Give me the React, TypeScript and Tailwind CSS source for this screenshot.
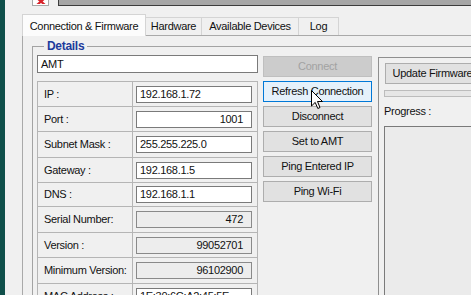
import clsx from "clsx";

const rows = [
  { label: "IP :", value: "192.168.1.72", h: "h-[25px]" },
  { label: "Port :", value: "1001", h: "h-[25px]", right: true },
  { label: "Subnet Mask :", value: "255.255.225.0", h: "h-[26px]" },
  { label: "Gateway :", value: "192.168.1.5", h: "h-[25px]" },
  { label: "DNS :", value: "192.168.1.1", h: "h-[24px]" },
  { label: "Serial Number:", value: "472", h: "h-[26px]", right: true, ro: true },
  { label: "Version :", value: "99052701", h: "h-[25px]", right: true, ro: true },
  { label: "Minimum Version:", value: "96102900", h: "h-[26px]", right: true, ro: true },
  { label: "MAC Address :", value: "1E:30:6C:A2:45:5E", h: "h-[25px]" },
];

const buttons = ["Connect", "Refresh Connection", "Disconnect", "Set to AMT", "Ping Entered IP", "Ping Wi-Fi"];

function Field({ value, right, ro }: { value: string; right?: boolean; ro?: boolean }) {
  return (
    <div
      className={clsx(
        "ml-[3px] w-[116px] h-[17px] border flex items-center pl-[3px] whitespace-nowrap overflow-hidden",
        ro ? "bg-[#ededed] border-[#8a8a8a]" : "bg-white border-[#7a7a7a]",
        right && "justify-end pr-[8px]"
      )}
    >
      {value}
    </div>
  );
}

function Cursor() {
  return (
    <svg width="13" height="20" viewBox="0 0 13 20">
      <path d="M0.5 0.5 L0.5 16 L4.2 12.4 L6.8 18.5 L9 17.5 L6.5 11.5 L11.5 11.5 Z" fill="#fff" stroke="#000" strokeWidth="1" />
    </svg>
  );
}

export default function App() {
  return (
    <div className="w-[471px] h-[295px] overflow-hidden bg-[#f0f0f0] flex text-[11px] tracking-[-0.3px] leading-none text-[#111] font-['Liberation_Sans',Arial,sans-serif]">
      {/* window edge */}
      <div className="w-[5px] shrink-0 bg-[#0f4f4a]" />

      <div className="flex-1 flex flex-col min-w-0">
        {/* toolbar remnants */}
        <div className="h-[14px] flex items-start shrink-0">
          <div className="ml-[27px] w-[17px] h-[6px] border border-t-0 border-[#a8a8a8] bg-white flex justify-center">
            <svg width="10" height="4" viewBox="0 0 10 4">
              <path d="M1 -2 L5 1.5 L9 -2 M1 5 L5 1.5 L9 5" stroke="#d8232a" strokeWidth="2.2" fill="none" />
            </svg>
          </div>
          <div className="ml-[9px] flex-1 h-[6px] bg-[#a6a6a6] border-l border-b border-[#3c3c3c]" />
        </div>

        {/* tabs */}
        <div className="h-[21px] flex items-end pl-[17px] shrink-0 whitespace-nowrap">
          <div className="relative z-10 -mb-px h-[22px] w-[124px] bg-[#fcfcfc] border border-b-0 border-[#d4d4d4] flex items-center justify-center pt-[1px]">
            Connection &amp; Firmware
          </div>
          <div className="h-[18px] w-[56px] border border-b-0 border-l-0 border-[#d4d4d4] flex items-center justify-center">Hardware</div>
          <div className="h-[18px] w-[97px] border border-b-0 border-l-0 border-[#d4d4d4] flex items-center justify-center">Available Devices</div>
          <div className="h-[18px] w-[40px] border border-b-0 border-l-0 border-[#d4d4d4] flex items-center justify-center">Log</div>
        </div>

        {/* tab page */}
        <div className="flex-1 ml-[17px] border-l border-t border-[#a9a9a9] pl-[9px] pt-[3px]">
          <fieldset className="border-t border-l border-[#a3a3a3] pl-[4px] w-[470px]">
            <legend className="ml-[7px] px-[3px] h-[14px] leading-[14px] text-[12px] font-bold text-[#1c3b9c]">Details</legend>

            <div className="flex items-start">
              {/* left column */}
              <div className="w-[221px] shrink-0 flex flex-col pt-[2px]">
                <div className="h-[18px] border border-[#7a7a7a] bg-white flex items-center pl-[3px]">AMT</div>

                <div className="mt-[8px] border-l border-[#b5b5b5]">
                  {rows.map((r) => (
                    <div key={r.label} className={clsx("flex border-t border-[#b5b5b5]", r.h)}>
                      <div className="w-[95px] border-r border-[#b5b5b5] flex items-center pl-[6px] whitespace-nowrap">{r.label}</div>
                      <div className="w-[125px] border-r border-[#b5b5b5] flex items-center">
                        <Field value={r.value} right={r.right} ro={r.ro} />
                      </div>
                    </div>
                  ))}
                </div>
              </div>

              {/* buttons */}
              <div className="ml-[5px] w-[109px] shrink-0 flex flex-col gap-[4px] pt-[3px] relative">
                {buttons.map((b, i) => (
                  <div
                    key={b}
                    className={clsx(
                      "h-[21px] border flex items-center justify-center whitespace-nowrap",
                      i === 0 && "bg-[#cccccc] border-[#bfbfbf] text-[#a2a2a2]",
                      i === 1 && "bg-[#e5f1fb] border-[#0078d7]",
                      i > 1 && "bg-[#e1e1e1] border-[#adadad]"
                    )}
                  >
                    {b}
                  </div>
                ))}
                <div className="absolute left-[48px] top-[37px]">
                  <Cursor />
                </div>
              </div>

              {/* firmware panel */}
              <div className="ml-[6px] mt-[4px] flex-1 h-[260px] border-l border-t border-[#8f8f8f] pl-[5px] pt-[5px] flex flex-col">
                <div className="ml-[1px] w-[95px] h-[21px] border border-[#adadad] bg-[#e1e1e1] flex items-center justify-center whitespace-nowrap">
                  Update Firmware
                </div>
                <div className="mt-[6px] h-[7px] border border-[#bcbcbc] bg-[#e6e6e6]" />
                <div className="mt-[8px] h-[12px] flex items-center">Progress :</div>
                <div className="mt-[9px] flex-1 border-l border-t border-[#7a7a7a] bg-[#ebebeb]" />
              </div>
            </div>
          </fieldset>
        </div>
      </div>
    </div>
  );
}
